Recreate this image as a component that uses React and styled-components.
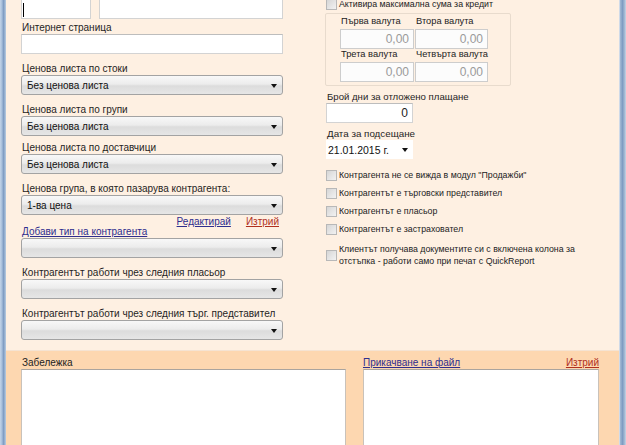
import React from "react";
import styled, { createGlobalStyle } from "styled-components";

const Global = createGlobalStyle`
  html, body { margin: 0; padding: 0; width: 626px; height: 445px; overflow: hidden; }
  body { font-family: "Liberation Sans", Arial, sans-serif; }
`;

const Frame = styled.div`
  display: flex;
  width: 626px;
  height: 445px;
  overflow: hidden;
`;

const Border = styled.div`
  width: ${(p) => p.$w}px;
  flex: none;
  background: linear-gradient(to right, ${(p) => p.$colors});
`;

const Content = styled.div`
  flex: 1;
  display: flex;
  flex-direction: column;
  min-width: 0;
`;

const TopArea = styled.div`
  height: 351px;
  flex: none;
  background: #fef0e2;
  display: grid;
  grid-template-columns: 262px 290px;
  column-gap: 43px;
  padding-left: 15px;
  overflow: hidden;
  box-sizing: border-box;
  border-bottom: 1px solid #f5e3d2;
`;

const Column = styled.div`
  display: flex;
  flex-direction: column;
  margin-top: ${(p) => p.$mt || 0}px;
`;

const Row = styled.div`
  display: flex;
  gap: ${(p) => p.$gap || 0}px;
  align-items: center;
`;

const Field = styled.div`
  display: flex;
  flex-direction: column;
  margin-top: ${(p) => p.$mt ?? 7}px;
`;

const Label = styled.div`
  font-size: ${(p) => p.$size || 10}px;
  line-height: 12px;
  height: 12px;
  color: #1e1e1e;
  margin-bottom: ${(p) => p.$mb || 0}px;
  white-space: nowrap;
  padding-left: 1px;
`;

const TextBox = styled.div`
  height: 20px;
  width: ${(p) => (p.$w ? p.$w + "px" : "auto")};
  flex: ${(p) => (p.$grow ? "1" : "none")};
  box-sizing: border-box;
  background: #fff;
  border: 1px solid #d3d3d3;
  border-top-color: #bdbdbd;
  font-size: 12px;
  line-height: 18px;
  text-align: ${(p) => p.$align || "left"};
  padding: 0 4px 0 1px;
  color: #222;
`;

const Caret = styled.span`
  display: inline-block;
  width: 1px;
  height: 14px;
  background: #000;
  vertical-align: middle;
`;

const SelectBox = styled.div`
  height: 20px;
  box-sizing: border-box;
  border: 1px solid #a3a3a3;
  border-radius: 3px;
  background: linear-gradient(#f8f8f8, #ececec 45%, #dcdcdc 55%, #e6e6e6);
  display: flex;
  align-items: center;
  justify-content: space-between;
  padding: 0 5px 0 5px;
  font-size: 10px;
  color: #111;
`;

const Arrow = styled.span`
  width: 0;
  height: 0;
  border-left: 3px solid transparent;
  border-right: 3px solid transparent;
  border-top: 4px solid #111;
  margin-top: 1px;
`;

const Link = styled.a`
  font-size: 10px;
  line-height: 12px;
  color: ${(p) => (p.$danger ? "#b0301e" : "#2e2e8e")};
  text-decoration: underline;
  cursor: pointer;
  white-space: nowrap;
`;

const LinksRow = styled.div`
  display: flex;
  justify-content: flex-end;
  gap: 15px;
  padding-right: 4px;
  height: 10px;
  margin-top: 1px;
  line-height: 10px;
`;

const Small = styled.div`
  font-size: 8.8px;
  line-height: 12px;
  color: #222;
  white-space: nowrap;
`;

const CheckRow = styled.div`
  display: flex;
  align-items: center;
  gap: 2px;
  margin-top: ${(p) => p.$mt ?? 0}px;
`;

const Box = styled.span`
  width: 11px;
  height: 11px;
  flex: none;
  box-sizing: border-box;
  border: 1px solid #b8b8b8;
  background: linear-gradient(135deg, #d6d6d6, #f2f2f2);
`;

const GroupBox = styled.div`
  margin-top: 3px;
  margin-left: -1px;
  width: 186px;
  box-sizing: border-box;
  border: 1px solid #e8dbcd;
  border-radius: 2px;
  padding: 2px 0 3px 14px;
  display: grid;
  grid-template-columns: 74px 73px;
  column-gap: 1px;
`;

const Cell = styled.div`
  display: flex;
  flex-direction: column;
`;

const CurLabel = styled.div`
  font-size: 9.3px;
  line-height: 11px;
  height: 11px;
  margin-bottom: 2px;
  padding-left: 1px;
  color: #222;
  white-space: nowrap;
`;

const CurBox = styled.div`
  height: 20px;
  box-sizing: border-box;
  border: 1px solid #cdcdcd;
  background: #fcfcfc;
  font-size: 12px;
  line-height: 18px;
  color: #9a9a9a;
  text-align: right;
  padding-right: 4px;
`;

const DateBox = styled.div`
  width: 87px;
  height: 19px;
  box-sizing: border-box;
  background: #fff;
  display: flex;
  align-items: center;
  justify-content: space-between;
  padding: 0 5px 0 2px;
  font-size: 10.5px;
  color: #111;
`;

const BottomArea = styled.div`
  flex: 1;
  background: #fdd7b0;
  display: grid;
  grid-template-columns: 325px 236px;
  column-gap: 17px;
  padding: 6px 0 0 15px;
`;

const PaneHead = styled.div`
  display: flex;
  justify-content: space-between;
  align-items: center;
  height: 12px;
  font-size: 10px;
  line-height: 12px;
  color: #222;
  padding: 0 0 0 ${(p) => p.$pl || 0}px;
  margin-bottom: 0px;
`;

const Pane = styled.div`
  height: 100px;
  background: #fff;
  border: 1px solid #c9c2ba;
  border-top-color: #aaa49e;
`;

function Select({ value }) {
  return (
    <SelectBox>
      <span>{value}</span>
      <Arrow />
    </SelectBox>
  );
}

export default function App() {
  return (
    <>
      <Global />
      <Frame>
        <Border $w={6} $colors="#c3d4e8, #a9c0dc 30%, #7f9cc2 60%, #b9cde2" />
        <Content>
          <TopArea>
            <Column $mt={-1}>
              <Row $gap={8}>
                <TextBox $w={70}>
                  <Caret />
                </TextBox>
                <TextBox $grow />
              </Row>
              <Field $mt={3}>
                <Label $mb={0}>Интернет страница</Label>
                <TextBox />
              </Field>
              <Field $mt={9}>
                <Label>Ценова листа по стоки</Label>
                <Select value="Без ценова листа" />
              </Field>
              <Field $mt={9}>
                <Label>Ценова листа по групи</Label>
                <Select value="Без ценова листа" />
              </Field>
              <Field $mt={6}>
                <Label>Ценова листа по доставчици</Label>
                <Select value="Без ценова листа" />
              </Field>
              <Field $mt={9}>
                <Label>Ценова група, в която пазарува контрагента:</Label>
                <Select value="1-ва цена" />
              </Field>
              <LinksRow>
                <Link>Редактирай</Link>
                <Link $danger>Изтрий</Link>
              </LinksRow>
              <Field $mt={0}>
                <Label>
                  <Link>Добави тип на контрагента</Link>
                </Label>
                <Select value="" />
              </Field>
              <Field $mt={9}>
                <Label>Контрагентът работи чрез следния пласьор</Label>
                <Select value="" />
              </Field>
              <Field $mt={9}>
                <Label>Контрагентът работи чрез следния търг. представител</Label>
                <Select value="" />
              </Field>
            </Column>
            <Column $mt={-2}>
              <CheckRow>
                <Box />
                <Small>Активира максимална сума за кредит</Small>
              </CheckRow>
              <GroupBox>
                <Cell>
                  <CurLabel>Първа валута</CurLabel>
                  <CurBox>0,00</CurBox>
                </Cell>
                <Cell>
                  <CurLabel>Втора валута</CurLabel>
                  <CurBox>0,00</CurBox>
                </Cell>
                <Cell>
                  <CurLabel>Трета валута</CurLabel>
                  <CurBox>0,00</CurBox>
                </Cell>
                <Cell>
                  <CurLabel>Четвърта валута</CurLabel>
                  <CurBox>0,00</CurBox>
                </Cell>
              </GroupBox>
              <Field $mt={5}>
                <Label $size={9.6}>Брой дни за отложено плащане</Label>
                <TextBox $w={87} $align="right">
                  0
                </TextBox>
              </Field>
              <Field $mt={5}>
                <Label $size={9.8}>Дата за подсещане</Label>
                <DateBox>
                  <span>21.01.2015 г.</span>
                  <Arrow />
                </DateBox>
              </Field>
              <CheckRow $mt={10}>
                <Box />
                <Small>Контрагента не се вижда в модул "Продажби"</Small>
              </CheckRow>
              <CheckRow $mt={6}>
                <Box />
                <Small>Контрагентът е търговски представител</Small>
              </CheckRow>
              <CheckRow $mt={6}>
                <Box />
                <Small>Контрагентът е пласьор</Small>
              </CheckRow>
              <CheckRow $mt={6}>
                <Box />
                <Small>Контрагентът е застраховател</Small>
              </CheckRow>
              <CheckRow $mt={8}>
                <Box />
                <Small>
                  Клиентът получава документите си с включена колона за
                  <br />
                  отстъпка - работи само при печат с QuickReport
                </Small>
              </CheckRow>
            </Column>
          </TopArea>
          <BottomArea>
            <div>
              <PaneHead $pl={1}>Забележка</PaneHead>
              <Pane />
            </div>
            <div>
              <PaneHead>
                <Link>Прикачване на файл</Link>
                <Link $danger>Изтрий</Link>
              </PaneHead>
              <Pane />
            </div>
          </BottomArea>
        </Content>
        <Border $w={7} $colors="#e9eef5, #9fb6d2 20%, #7f9cc2 50%, #9db4d0 75%, #c6d5e6" />
      </Frame>
    </>
  );
}
